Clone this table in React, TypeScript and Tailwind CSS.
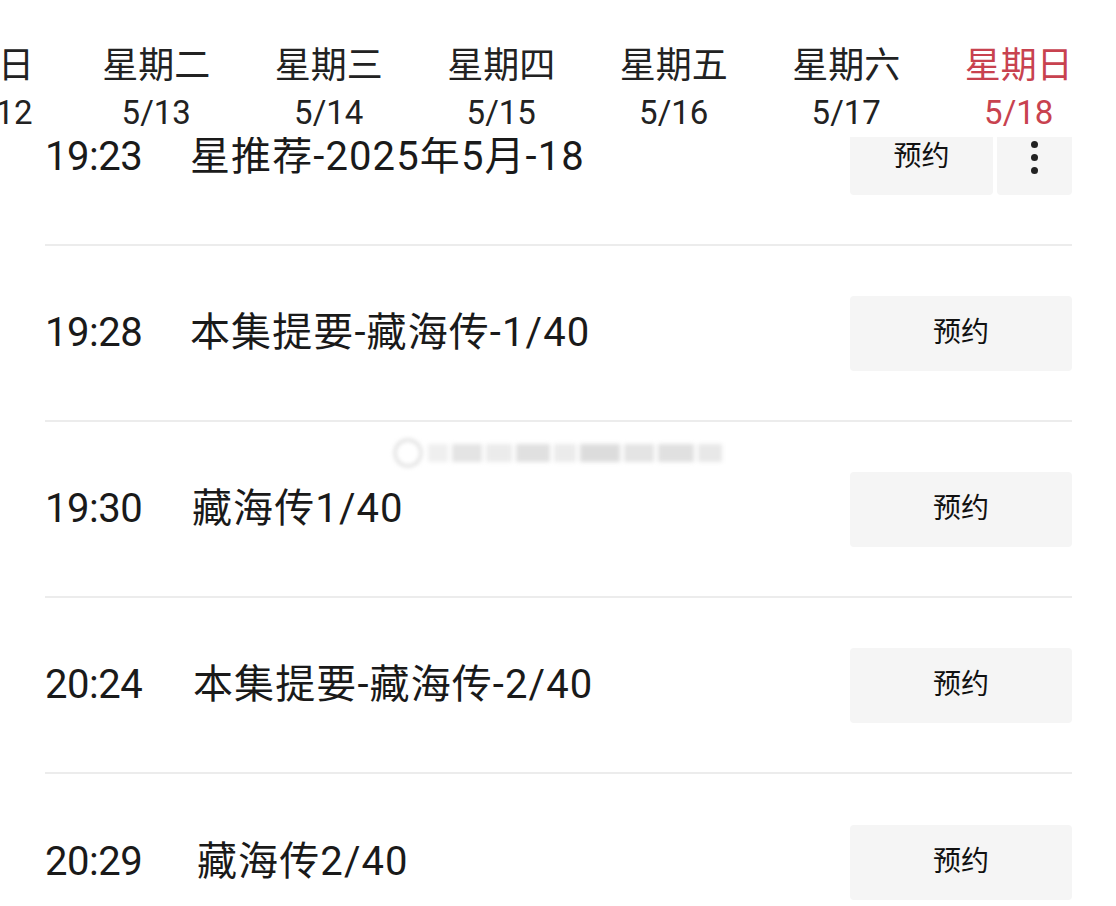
import React from "react";

const days = [
  { n: "星期二", d: "5/13" },
  { n: "星期三", d: "5/14" },
  { n: "星期四", d: "5/15" },
  { n: "星期五", d: "5/16" },
  { n: "星期六", d: "5/17" },
  { n: "星期日", d: "5/18", active: true },
];

const rows = [
  { t: "19:23", title: "星推荐-2025年5月-18", more: true, pl: "pl-0" },
  { t: "19:28", title: "本集提要-藏海传-1/40", pl: "pl-0" },
  { t: "19:30", title: "藏海传1/40", pl: "pl-[2px]" },
  { t: "20:24", title: "本集提要-藏海传-2/40", pl: "pl-[3px]" },
  { t: "20:29", title: "藏海传2/40", pl: "pl-[7px]" },
];

const font = { fontFamily: 'Roboto, "Noto Sans CJK SC", sans-serif' };

const wm = [
  "w-[20px] opacity-40",
  "w-[30px] opacity-70",
  "w-[26px] opacity-50",
  "w-[34px] opacity-80",
  "w-[22px] opacity-50",
  "w-[40px] opacity-90",
  "w-[30px] opacity-70",
  "w-[36px] opacity-80",
  "w-[24px] opacity-60",
];

export default function App() {
  return (
    <div
      className="relative w-[1116px] h-[906px] overflow-hidden bg-white text-[#1a1a1a]"
      style={font}
    >
      <div className="relative z-10 h-[137px] bg-white overflow-hidden">
        <div className="flex -ml-[74px] pt-[42px]">
          <div className="w-[144px] shrink-0 flex flex-col items-center text-[#222]">
            <div className="text-[36px] leading-[48px]">今日</div>
            <div className="text-[33px] leading-[46px]">5/12</div>
          </div>
          {days.map((d) => (
            <div
              key={d.d}
              className={`w-[172.5px] shrink-0 flex flex-col items-center ${
                d.active ? "text-[#c8424f]" : "text-[#222]"
              }`}
            >
              <div className="text-[36px] leading-[48px]">{d.n}</div>
              <div className="text-[33px] leading-[46px]">{d.d}</div>
            </div>
          ))}
        </div>
      </div>

      <div className="-mt-[67px] pl-[45px] pr-[44px]">
        {rows.map((r, i) => (
          <div
            key={r.t}
            className={`h-[176px] flex items-center ${
              i < rows.length - 1 ? "border-b-2 border-[#ececec]" : ""
            }`}
          >
            <div className="w-[145px] text-[40px] tracking-[-0.5px]">{r.t}</div>
            <div className={`flex-1 text-[40px] tracking-[1.1px] ${r.pl}`}>{r.title}</div>
            {r.more ? (
              <div className="flex gap-[4px]">
                <div className="w-[143px] h-[75px] bg-[#f5f5f5] rounded-[4px] flex items-center justify-center text-[28px] text-[#111]">
                  预约
                </div>
                <div className="w-[75px] h-[75px] bg-[#f5f5f5] rounded-[4px] flex flex-col items-center justify-center gap-[6px]">
                  <span className="w-[7px] h-[7px] rounded-full bg-[#222]" />
                  <span className="w-[7px] h-[7px] rounded-full bg-[#222]" />
                  <span className="w-[7px] h-[7px] rounded-full bg-[#222]" />
                </div>
              </div>
            ) : (
              <div className="w-[222px] h-[75px] bg-[#f5f5f5] rounded-[4px] flex items-center justify-center text-[28px] text-[#111]">
                预约
              </div>
            )}
          </div>
        ))}
      </div>

      {/* watermark */}
      <div className="absolute left-[394px] top-[436px] w-[330px] h-[34px] flex items-center gap-[6px] blur-[2px]">
        <div className="w-[28px] h-[28px] rounded-full border-2 border-[#cfcfcf] shrink-0" />
        <div className="flex-1 h-[18px] flex items-center gap-[4px]">
          {wm.map((c, k) => (
            <div key={k} className={`h-[18px] bg-[#d8d8d8] ${c}`} />
          ))}
        </div>
      </div>
    </div>
  );
}
